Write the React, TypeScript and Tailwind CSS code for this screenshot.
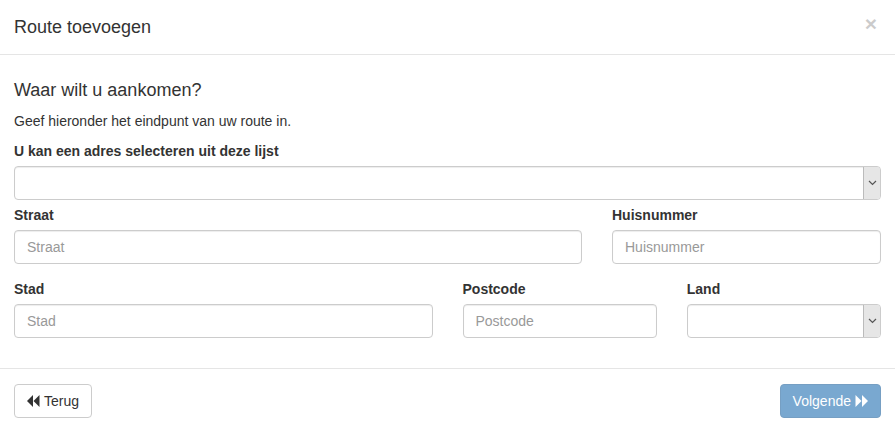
import React from 'react';

const font = { fontFamily: '"Liberation Sans", Arial, sans-serif' };

const inputCls =
  'block h-[34px] w-full rounded-[4px] border border-[#ccc] bg-white px-3 py-1.5 text-sm text-[#555] shadow-[inset_0_1px_1px_rgba(0,0,0,0.075)] outline-none placeholder:text-[#999]';

function FakeSelect() {
  return (
    <div className="relative h-[34px] w-full rounded-[4px] border border-[#ccc] bg-white shadow-[inset_0_1px_1px_rgba(0,0,0,0.075)]">
      <div className="absolute top-0 right-0 bottom-0 flex w-[17px] items-center justify-center rounded-r-[3px] border-l border-[#bbb] bg-[#e6e6e6]">
        <svg width="9" height="6" viewBox="0 0 9 6" fill="none">
          <path d="M1 1l3.5 3.5L8 1" stroke="#555" strokeWidth="1.2" />
        </svg>
      </div>
    </div>
  );
}

function Label({ children }: { children: React.ReactNode }) {
  return <label className="mb-[5px] block text-sm leading-5 font-bold text-[#333]">{children}</label>;
}

function Backward() {
  return (
    <svg width="13" height="12" viewBox="0 0 13 12" fill="currentColor">
      <path d="M6 0v12L0 6z" />
      <path d="M12.5 0v12L6.5 6z" />
    </svg>
  );
}

function Forward() {
  return (
    <svg width="13" height="12" viewBox="0 0 13 12" fill="currentColor">
      <path d="M0.5 0v12L6.5 6z" />
      <path d="M7 0v12L13 6z" />
    </svg>
  );
}

export default function App() {
  return (
    <div className="min-h-[431px] w-full bg-white text-sm text-[#333]" style={font}>
      {/* header */}
      <div className="flex items-start justify-between border-b border-[#e5e5e5] px-[14px] py-[15px]">
        <h4 className="text-[18px] leading-[24px] text-[#333]">Route toevoegen</h4>
        <button className="-mt-[2px] pr-1 text-[21px] leading-none font-bold text-black opacity-20">×</button>
      </div>

      {/* body */}
      <div className="px-[14px] pt-[16px] pb-[15px]">
        <h4 className="mt-[10px] mb-[10px] text-[18px] leading-[1.1]">Waar wilt u aankomen?</h4>
        <p className="mb-[10px] leading-5">Geef hieronder het eindpunt van uw route in.</p>

        <div className="mb-[5px]">
          <Label>U kan een adres selecteren uit deze lijst</Label>
          <FakeSelect />
        </div>

        <div className="-mx-[15px] mb-[15px] grid grid-cols-12">
          <div className="col-span-8 px-[15px]">
            <Label>Straat</Label>
            <input className={inputCls} placeholder="Straat" />
          </div>
          <div className="col-span-4 px-[15px]">
            <Label>Huisnummer</Label>
            <input className={inputCls} placeholder="Huisnummer" />
          </div>
        </div>

        <div className="-mx-[15px] mb-[15px] grid grid-cols-12">
          <div className="col-span-6 px-[15px]">
            <Label>Stad</Label>
            <input className={inputCls} placeholder="Stad" />
          </div>
          <div className="col-span-3 px-[15px]">
            <Label>Postcode</Label>
            <input className={inputCls} placeholder="Postcode" />
          </div>
          <div className="col-span-3 px-[15px]">
            <Label>Land</Label>
            <FakeSelect />
          </div>
        </div>
      </div>

      {/* footer */}
      <div className="flex items-center justify-between border-t border-[#e5e5e5] px-[14px] py-[15px]">
        <button className="flex h-[34px] items-center gap-[4px] rounded-[4px] border border-[#ccc] bg-white px-3 text-sm text-[#333]">
          <Backward />
          Terug
        </button>
        <button className="flex h-[34px] items-center gap-[4px] rounded-[4px] border border-[#2e6da4] bg-[#337ab7] px-3 text-sm text-white opacity-65">
          Volgende
          <Forward />
        </button>
      </div>
    </div>
  );
}
